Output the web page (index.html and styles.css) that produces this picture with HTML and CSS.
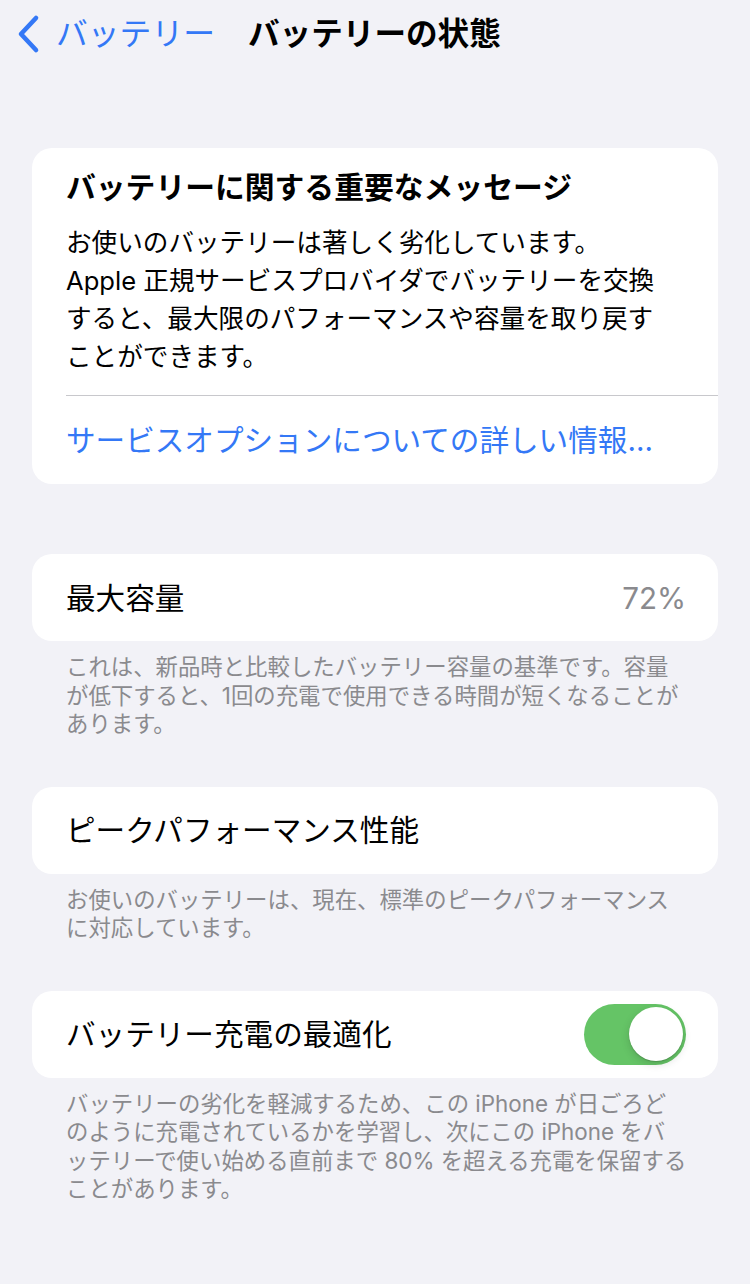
FILE: index.html
```html
<!DOCTYPE html>
<html lang="ja">
<head>
<meta charset="utf-8">
<link rel="stylesheet" href="styles.css">
</head>
<body>
<div class="screen">
  <header class="nav">
    <a class="back">
      <svg class="chev" width="26" height="40" viewBox="0 0 26 40"><path d="M20 4 L5 20 L20 36" fill="none" stroke="#3478f6" stroke-width="4.6" stroke-linecap="round" stroke-linejoin="round"/></svg>
      <span class="back-label">バッテリー</span>
    </a>
    <h1 class="title">バッテリーの状態</h1>
  </header>

  <section class="card msg">
    <h2 class="msg-title">バッテリーに関する重要なメッセージ</h2>
    <p class="msg-body">お使いのバッテリーは著しく劣化しています。<br>Apple 正規サービスプロバイダでバッテリーを交換<br>すると、最大限のパフォーマンスや容量を取り戻す<br>ことができます。</p>
    <div class="sep"></div>
    <div class="link-row"><span class="link">サービスオプションについての詳しい情報...</span></div>
  </section>

  <section class="card row">
    <span class="label">最大容量</span>
    <span class="value">72%</span>
  </section>
  <p class="footer">これは、新品時と比較したバッテリー容量の基準です。容量<br>が低下すると、1回の充電で使用できる時間が短くなることが<br>あります。</p>

  <section class="card row">
    <span class="label">ピークパフォーマンス性能</span>
  </section>
  <p class="footer">お使いのバッテリーは、現在、標準のピークパフォーマンス<br>に対応しています。</p>

  <section class="card row">
    <span class="label">バッテリー充電の最適化</span>
    <span class="toggle"><span class="knob"></span></span>
  </section>
  <p class="footer">バッテリーの劣化を軽減するため、この iPhone が日ごろど<br>のように充電されているかを学習し、次にこの iPhone をバ<br>ッテリーで使い始める直前まで 80% を超える充電を保留する<br>ことがあります。</p>
</div>
</body>
</html>
```

FILE: styles.css
```css
* { box-sizing: border-box; margin: 0; padding: 0; }
html, body { background: #f2f2f7; }
body {
  width: 750px;
  height: 1284px;
  overflow: hidden;
  font-family: Inter, "Noto Sans CJK JP", sans-serif;
  color: #000;
}
.screen {
  display: flex;
  flex-direction: column;
  padding: 0 32px;
}
.nav {
  height: 68px;
  display: flex;
  align-items: center;
  margin: 0 -32px;
  padding-left: 16px;
}
.back {
  display: flex;
  align-items: center;
  gap: 14px;
  color: #3478f6;
  font-size: 31.8px;
  line-height: 40px;
}
.chev { display: block; }
.title {
  margin-left: 33px;
  font-size: 31.6px;
  font-weight: 700;
  line-height: 40px;
}
.card {
  background: #fff;
  border-radius: 20px;
}
.msg {
  margin-top: 80px;
  padding: 19px 0 0 34px;
}
.msg-title {
  font-size: 29.8px;
  font-weight: 700;
  line-height: 40px;
  white-space: nowrap;
}
.msg-body {
  margin-top: 17px;
  font-size: 25.6px;
  line-height: 38px;
  white-space: nowrap;
}
.sep {
  margin-top: 19px;
  height: 1px;
  background: #c8c8cc;
}
.link-row {
  height: 88px;
  display: flex;
  align-items: center;
}
.link {
  color: #3478f6;
  font-size: 29.6px;
  line-height: 40px;
  white-space: nowrap;
}
.row {
  height: 87px;
  display: flex;
  align-items: center;
  justify-content: space-between;
  padding: 0 32px 0 34px;
  margin-top: 48px;
}
.msg + .row { margin-top: 70px; }
.label {
  font-size: 29.6px;
  line-height: 40px;
  white-space: nowrap;
}
.value {
  color: #8a8a8e;
  font-size: 29.6px;
  line-height: 40px;
}
.footer {
  margin-top: 12px;
  padding-left: 34px;
  color: #8a8a8e;
  font-size: 22.4px;
  line-height: 28.5px;
  white-space: nowrap;
}
.toggle {
  width: 102px;
  height: 61px;
  border-radius: 31px;
  background: #65c466;
  display: flex;
  align-items: center;
  justify-content: flex-end;
  padding-right: 3.5px;
}
.knob {
  width: 54px;
  height: 54px;
  border-radius: 50%;
  background: #fff;
  box-shadow: 0 3px 8px rgba(0,0,0,0.15), 0 1px 1px rgba(0,0,0,0.16);
}
```
